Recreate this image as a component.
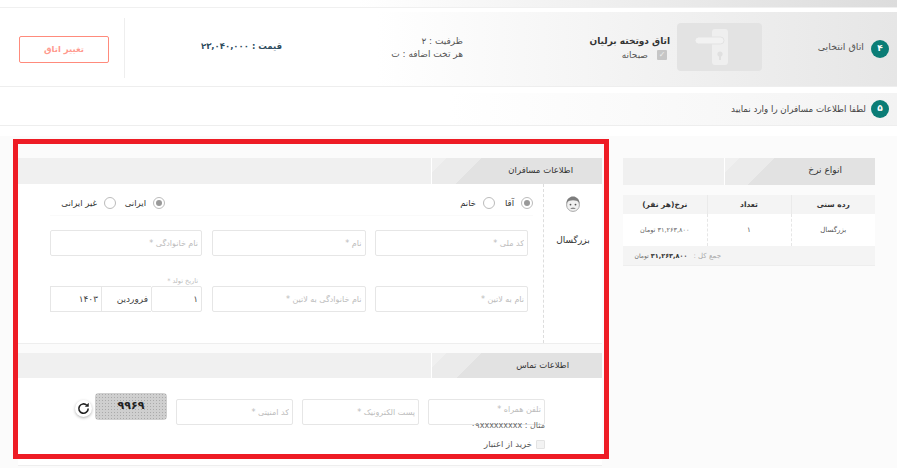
<div class="page" dir="rtl">
  <div class="strip"></div>

  <section class="room">
    <span class="step">۴</span>
    <span class="room-label">اتاق انتخابی</span>
    <svg class="door" viewBox="0 0 85 48" aria-hidden="true">
      <rect width="85" height="48" rx="4" fill="#e3e3e3" />
      <rect x="35" y="6" width="16" height="36" rx="3" fill="#efefef" />
      <rect x="18" y="14" width="29" height="7" rx="3.5" fill="#f2f2f2" stroke="#e3e3e3" />
      <circle cx="43" cy="31" r="2.6" fill="#e0e0e0" />
      <rect x="42" y="32" width="2" height="5" fill="#e0e0e0" />
    </svg>
    <div class="room-title">
      <strong>اتاق دوتخته برلیان</strong>
      <div class="meal"><span class="check">✓</span>صبحانه</div>
    </div>
    <div class="capacity">
      <div>ظرفیت : ۲</div>
      <div>هر تخت اضافه : ت</div>
    </div>
    <div class="price">قیمت : ۲۳,۰۴۰,۰۰۰</div>
    <div class="action"><button>تغییر اتاق</button></div>
  </section>

  <section class="notice">
    <span class="step">۵</span>
    <span>لطفا اطلاعات مسافران را وارد نمایید</span>
  </section>

  <main class="main">
    <aside class="side">
      <header class="head"><h2 class="tab side-tab">انواع نرخ</h2></header>
      <table>
        <thead>
          <tr><th>رده سنی</th><th>تعداد</th><th>نرخ(هر نفر)</th></tr>
        </thead>
        <tbody>
          <tr><td>بزرگسال</td><td>۱</td><td class="rate">۳۱,۲۶۳,۸۰۰ تومان</td></tr>
        </tbody>
      </table>
      <div class="sum"><span>جمع کل :</span><b>۳۱,۲۶۳,۸۰۰</b><small>تومان</small></div>
    </aside>

    <div class="form">
      <header class="head"><h2 class="tab">اطلاعات مسافران</h2></header>
      <div class="passenger">
        <div class="who">
          <svg class="avatar" viewBox="0 0 16 18" aria-hidden="true">
            <circle cx="8" cy="9" r="6.4" fill="#f1f1f1" stroke="#a9a9a9" />
            <path d="M1.4 8C1.2 3 4.5.6 8 .6s6.8 2.4 6.6 7.4c-.8-2-1.8-3-3-3.2C9.500 4 6.500 4 4.400 4.800 3.200 5 2.200 6 1.400 8z" fill="#7d7d7d" />
            <circle cx="5.500" cy="8.600" r=".9" fill="#555" />
            <circle cx="10.500" cy="8.600" r=".9" fill="#555" />
            <path d="M5 12.300c1-.9 5-.9 6 0-1.500.7-4.500.7-6 0z" fill="#666" />
          </svg>
          <span>بزرگسال</span>
        </div>
        <div class="fields">
          <div class="radios">
            <div class="radio-group">
              <label class="opt gender"><span class="radio on"></span>آقا</label>
              <label class="opt"><span class="radio"></span>خانم</label>
            </div>
            <div class="radio-group">
              <label class="opt nation"><span class="radio on"></span>ایرانی</label>
              <label class="opt"><span class="radio"></span>غیر ایرانی</label>
            </div>
          </div>
          <div class="grid">
            <input placeholder="کد ملی *" />
            <input placeholder="نام *" />
            <input placeholder="نام خانوادگی *" />
            <input placeholder="نام به لاتین *" />
            <input placeholder="نام خانوادگی به لاتین *" />
            <div class="birth">
              <span class="birth-label">تاریخ تولد *</span>
              <div class="date">
                <input class="day" value="۱" />
                <div class="date-cell">فروردین</div>
                <div class="date-cell">۱۴۰۳</div>
              </div>
            </div>
          </div>
        </div>
      </div>

      <header class="head contact-head"><h2 class="tab contact-tab">اطلاعات تماس</h2></header>
      <div class="contact">
        <div class="phone">
          <input class="phone-input" placeholder="تلفن همراه *" />
          <div class="hint">مثال : ۰۹xxxxxxxxx</div>
          <label class="credit"><span class="box"></span>خرید از اعتبار</label>
        </div>
        <input placeholder="پست الکترونیک *" />
        <input placeholder="کد امنیتی *" />
        <div class="captcha">۹۹۶۹</div>
        <button class="refresh" aria-label="refresh">
          <svg viewBox="0 0 16 16" aria-hidden="true">
            <path d="M13 8a5 5 0 1 1-1.500-3.500" fill="none" stroke="#222" stroke-width="1.700" />
            <path d="M13.600 1.800v4.200H9.400z" fill="#222" />
          </svg>
        </button>
      </div>
    </div>
  </main>

  <div class="frame"></div>
</div>

<style>
  :global(body) {
    margin: 0;
    background: #fff;
  }
  .page {
    position: relative;
    box-sizing: border-box;
    width: 904px;
    height: 468px;
    padding-right: 7px;
    overflow: hidden;
    font-family: "DejaVu Sans", sans-serif;
    font-size: 9px;
    color: #555;
  }
  .strip {
    height: 8px;
    background: linear-gradient(to left, #dcdcdc, #fff 60%);
    border-bottom: 1px solid #f0f0f0;
    box-sizing: border-box;
  }
  .room {
    display: flex;
    align-items: center;
    box-sizing: border-box;
    height: 75px;
    margin-top: 4px;
    padding-right: 8px;
    background: linear-gradient(to left, #e6e6e6, #fff 58%);
    border-bottom: 1px solid #eee;
  }
  .step {
    flex: none;
    display: flex;
    align-items: center;
    justify-content: center;
    width: 18px;
    height: 18px;
    margin-left: 7px;
    padding-bottom: 3px;
    box-sizing: border-box;
    border-radius: 50%;
    background: #0b7d76;
    color: #fff;
    font-size: 9px;
    font-weight: 700;
  }
  .notice .step {
    margin-left: 5px;
  }
  .room-label {
    flex: none;
    width: 102px;
    margin-top: -6px;
    font-size: 9.500px;
  }
  .door {
    flex: none;
    width: 85px;
    height: 48px;
    margin-left: 7px;
    margin-top: -5px;
  }
  .room-title {
    flex: none;
    width: 207px;
    margin-top: -4px;
  }
  .room-title strong {
    display: block;
    font-size: 9px;
    line-height: 14px;
    color: #333;
  }
  .meal {
    display: flex;
    align-items: center;
    gap: 9px;
    margin-top: 1px;
    margin-right: 3px;
    line-height: 12px;
  }
  .check {
    display: flex;
    align-items: center;
    justify-content: center;
    width: 10px;
    height: 10px;
    background: #c6c6c6;
    border-radius: 1px;
    color: #eee;
    font-size: 8px;
  }
  .capacity {
    flex: none;
    width: 181px;
    line-height: 13px;
    margin-top: -3px;
  }
  .price {
    flex: none;
    box-sizing: border-box;
    width: 158px;
    height: 60px;
    line-height: 56px;
    margin-top: -2px;
    border-left: 1px solid #eee;
    color: #2d4b5e;
    font-weight: 700;
    font-size: 8.500px;
  }
  .action {
    flex: none;
    margin-right: 15px;
  }
  .action button {
    display: block;
    width: 90px;
    height: 27px;
    padding: 0;
    background: #fff;
    border: 1px solid #ff8b7c;
    border-radius: 2px;
    color: #ff9a8e;
    font: 700 8.500px "DejaVu Sans", sans-serif;
  }
  .notice {
    display: flex;
    align-items: center;
    box-sizing: border-box;
    height: 33px;
    margin-top: 6px;
    padding-right: 8px;
    background: linear-gradient(to left, #f3f3f3, #fff 50%);
    border-bottom: 1px solid #eee;
    color: #444;
    font-size: 8.700px;
  }
  .main {
    display: flex;
    align-items: flex-start;
    gap: 21px;
    box-sizing: border-box;
    height: 332px;
    margin-top: 10px;
    padding: 22px 22px 0 0;
    background: #fbfbfb;
  }
  .side {
    flex: none;
    width: 252px;
  }
  .head {
    height: 26px;
    background: #f0f0f0;
  }
  .tab {
    box-sizing: border-box;
    width: 171px;
    height: 100%;
    margin: 0;
    padding-right: 29px;
    border-left: 1px solid #fff;
    background: linear-gradient(135deg, #f0f0f0 10px, #ebebeb 10px, #ebebeb 35px, #e2e2e2 35px);
    font-size: 8.500px;
    font-weight: 400;
    line-height: 25px;
    color: #333;
  }
  .side-tab {
    width: 151px;
    height: 27px;
    padding-right: 33px;
    font-size: 9px;
  }
  .contact-tab {
    padding-right: 33px;
  }
  .side .head {
    height: 27px;
  }
  table {
    width: 100%;
    margin-top: 10px;
    border-collapse: collapse;
    table-layout: fixed;
    font-size: 7px;
    text-align: center;
  }
  th {
    height: 19px;
    padding: 0;
    background: #f4f4f4;
    border-left: 1px solid #eaeaea;
    font-size: 7.500px;
    color: #333;
  }
  th:last-child {
    border-left: 0;
  }
  td {
    height: 32px;
    padding: 0;
    background: #fff;
    border-left: 1px dashed #e6e6e6;
  }
  td:last-child {
    border-left: 0;
  }
  .rate {
    font-size: 6.500px;
    color: #666;
  }
  .sum {
    display: flex;
    align-items: center;
    height: 19px;
    padding-right: 154px;
    background: #f4f4f4;
    border-bottom: 1px solid #eee;
    color: #aaa;
    font-size: 7px;
  }
  .sum b {
    margin-right: 6px;
    color: #333;
    font-size: 6.500px;
  }
  .sum small {
    margin-right: 2px;
    color: #666;
    font-size: 6px;
  }
  .form {
    flex: none;
    width: 584px;
  }
  .passenger {
    display: flex;
    height: 159px;
    background: #fff;
    border-bottom: 1px solid #eee;
  }
  .who {
    flex: none;
    box-sizing: border-box;
    width: 59px;
    padding-top: 12px;
    border-left: 1px dashed #ddd;
    text-align: center;
    color: #333;
    font-size: 9px;
  }
  .who span {
    display: block;
    margin-top: 21px;
  }
  .avatar {
    display: block;
    width: 16px;
    height: 18px;
    margin: 0 auto;
  }
  .fields {
    flex: 1;
    padding: 0 15px 0 32px;
  }
  .radios {
    display: flex;
    height: 31px;
    margin: 0 -5px 14px 0;
    border-bottom: 1px solid #fafafa;
  }
  .radio-group {
    display: flex;
    align-items: center;
    height: 24px;
    margin-top: 7px;
  }
  .radio-group:first-child {
    flex: 0 0 368px;
  }
  .opt {
    display: flex;
    align-items: center;
    gap: 7px;
    color: #333;
    font-size: 8.500px;
    line-height: 8px;
  }
  .gender {
    width: 38px;
  }
  .nation {
    width: 49px;
  }
  .radio {
    flex: none;
    position: relative;
    box-sizing: border-box;
    width: 12px;
    height: 12px;
    border: 1px solid #bbb;
    border-radius: 50%;
    background: #fff;
  }
  .radio.on::after {
    content: "";
    position: absolute;
    inset: 2px;
    border-radius: 50%;
    background: #999;
  }
  .grid {
    display: grid;
    grid-template-columns: 153px 154px 152px;
    grid-auto-rows: 26px;
    column-gap: 9.500px;
    row-gap: 30px;
  }
  input {
    box-sizing: border-box;
    width: 100%;
    height: 26px;
    padding: 0 3px;
    background: #fff;
    border: 1px solid #e6e6e6;
    border-radius: 2px;
    outline: 0;
    font: 8px "DejaVu Sans", sans-serif;
    color: #555;
  }
  input.day {
    font-size: 9px;
  }
  input::placeholder {
    color: #bcbcbc;
    opacity: 1;
  }
  .birth {
    position: relative;
  }
  .birth-label {
    position: absolute;
    top: -9px;
    right: 4px;
    font-size: 6.500px;
    line-height: 9px;
    color: #bbb;
  }
  .date {
    display: grid;
    grid-template-columns: 51px 50px 51px;
    height: 26px;
  }
  .date-cell {
    box-sizing: border-box;
    padding: 0 3px;
    border: 1px solid #e6e6e6;
    border-right: 0;
    line-height: 24px;
    color: #444;
  }
  .contact-head {
    height: 25px;
    margin-top: 9px;
  }
  .contact {
    display: flex;
    align-items: flex-start;
    gap: 9px;
    box-sizing: border-box;
    height: 88px;
    padding: 21px 57px 0 0;
    background: #fff;
    border-bottom: 1px solid #eee;
  }
  .contact > input,
  .phone {
    flex: none;
    width: 117px;
  }
  .phone-input {
    padding-bottom: 5px;
  }
  .hint {
    margin-top: -5px;
    white-space: nowrap;
    font-size: 8px;
    line-height: 11px;
    color: #666;
  }
  .credit {
    display: flex;
    align-items: center;
    gap: 4px;
    margin-top: 8px;
    color: #555;
    font-size: 8.500px;
  }
  .box {
    flex: none;
    width: 9px;
    height: 9px;
    border: 1px solid #e3e3e3;
    border-radius: 1px;
    background: #f3f3f3;
    box-sizing: border-box;
  }
  .captcha {
    flex: none;
    box-sizing: border-box;
    width: 72px;
    height: 27px;
    margin-top: -6px;
    border-radius: 4px;
    background: #cfcfcf radial-gradient(circle, #aaa 30%, transparent 35%) 0 0 / 3px 3px;
    color: #222;
    font-size: 11px;
    font-weight: 700;
    letter-spacing: 2px;
    line-height: 25px;
    text-align: center;
  }
  .refresh {
    flex: none;
    display: flex;
    align-items: center;
    justify-content: center;
    width: 17px;
    height: 17px;
    margin: 1px -6px 0 0;
    padding: 0;
    border: 0;
    border-radius: 50%;
    background: #fff;
    box-shadow: 0 1px 3px rgba(0, 0, 0, 0.3);
  }
  .refresh svg {
    width: 15px;
    height: 15px;
  }
  .frame {
    position: absolute;
    left: 13px;
    top: 139px;
    width: 596px;
    height: 320px;
    box-sizing: border-box;
    border: 5px solid #ee1c25;
    pointer-events: none;
  }
</style>
